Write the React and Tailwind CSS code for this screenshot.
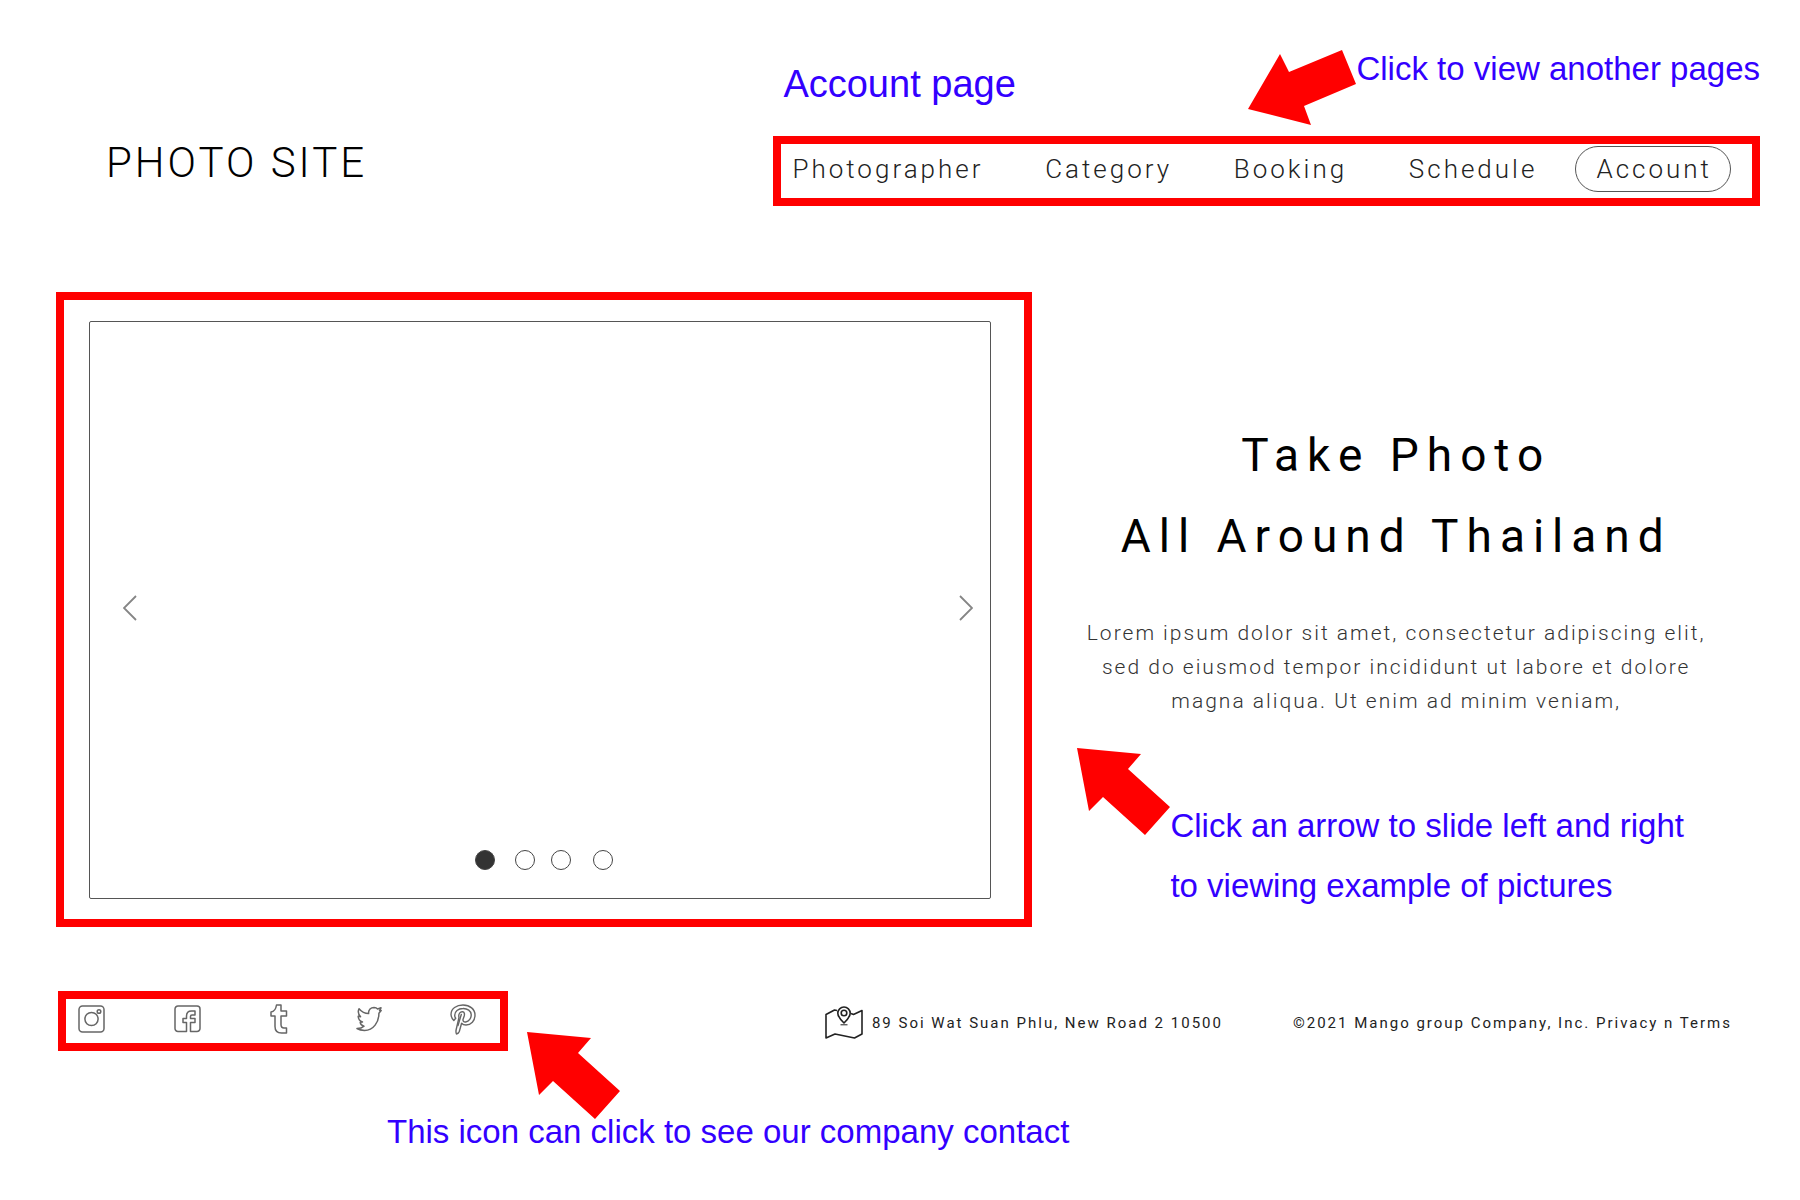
import React, { useState } from "react";

const NAV = ["Photographer", "Category", "Booking", "Schedule"];
const DOT_GAPS = ["", "ml-5", "ml-4", "ml-[22px]"];

function ArrowUpLeft({ className }) {
  return (
    <svg aria-hidden="true" width="93" height="87" viewBox="0 0 93 87" className={`shrink-0 ${className}`}>
      <polygon fill="#ff0000" points="0,0 64,6 51,21 93,59 68,87 26,49 12,63" />
    </svg>
  );
}

function ArrowDownLeft({ className }) {
  return (
    <svg aria-hidden="true" width="108" height="75" viewBox="0 0 108 75" className={`shrink-0 ${className}`}>
      <polygon fill="#ff0000" points="0,59 32,4 41,22 94,0 108,34 56,56 63,75" />
    </svg>
  );
}

function Chevron({ points }) {
  return (
    <svg aria-hidden="true" width="14" height="26" viewBox="0 0 14 26" fill="none" stroke="#858585" strokeWidth="1.8">
      <polyline points={points} />
    </svg>
  );
}

const line = { fill: "none", stroke: "#666666", strokeWidth: 1.5, strokeLinejoin: "round", strokeLinecap: "round" };

function Instagram() {
  return (
    <svg aria-hidden="true" width="28" height="28" viewBox="0 0 28 28" {...line}>
      <rect x="1" y="1" width="25" height="26" rx="3.5" />
      <circle cx="13.5" cy="14" r="6.6" />
      <circle cx="21" cy="6.5" r="1.8" />
    </svg>
  );
}

function Facebook() {
  return (
    <svg aria-hidden="true" width="28" height="28" viewBox="0 0 28 28" {...line}>
      <path d="M12.5 26.5H4A3 3 0 0 1 1 23.500V4A3 3 0 0 1 4 1H23A3 3 0 0 1 26 4V23.500A3 3 0 0 1 23 26.500H16.500V17.500H21V13.500H16.500V11.500Q16.500 10 18 10H21V6H17.500Q12.500 6 12.500 11V13.500H9V17.500H12.500Z" />
    </svg>
  );
}

function Tumblr() {
  return (
    <svg aria-hidden="true" width="18" height="30" viewBox="0 0 18 30" {...line}>
      <path d="M6.500 1H11V7H16.500V12H11V20.500Q11 24 14 24H16.500V29H11.500Q5 29 5 22.500V12H1V8Q5.500 7.500 6.500 1Z" />
    </svg>
  );
}

function Twitter() {
  return (
    <svg aria-hidden="true" width="26" height="26" viewBox="0 0 26 26" {...line}>
      <path d="M1 22.500Q5.500 22.500 8 20.200Q4.500 19.300 4.200 16.200L6.500 16Q2.300 14.500 2.200 10.200L4.600 10.700Q1 7.200 3 2.700Q7 7.400 12.600 7.600C12.200 3.500 15 1.500 18 1.500Q20.300 1.600 21.600 3L25 1.800L23.600 4.600L25.200 4.500L22.900 7.200C23 16 17.500 24.500 8.500 24.500Q4 24.400 1 22.500Z" />
    </svg>
  );
}

function Pinterest() {
  return (
    <svg aria-hidden="true" width="26" height="31" viewBox="0 0 26 31" {...line} strokeWidth="1.4">
      <path d="M3.800 16.500A9.500 9.500 0 0 1 1 10.500C1 4.500 6.500 1 13 1C20 1 25 5.300 25 11C25 17 21 21 16 21Q13 21 11.600 19.200L9.300 27.500Q8.500 29.500 6.500 30Q5.600 28 6.200 25.500L9 13.500C8 9.500 10.500 7.600 12.500 7.800C14.600 8 14.700 10.200 14.200 12L13 15.500C12.700 17.300 14 18.300 15.700 18C19 17.500 21.400 14 21.200 10.500C21 7 17.500 4.400 13 4.500C8 4.500 4.700 7.500 4.700 11.200Q4.700 13 5.700 14.300Z" />
      <path d="M8 21.500L11.300 10.500" />
    </svg>
  );
}

function MapPin() {
  return (
    <svg aria-hidden="true" width="38" height="34" viewBox="0 0 38 34" fill="none" stroke="#222222" strokeWidth="1.6" strokeLinejoin="round">
      <path d="M12 4.500L9.500 4L1 8.500V32L10 28L29.500 32L37 28V4.500L28.500 8.500L26 7.500" />
      <path d="M19 17Q12.800 11 12.800 7.200A6.200 6.200 0 0 1 25.200 7.200Q25.200 11 19 17Z" />
      <circle cx="19" cy="7" r="2.800" />
      <path d="M15.500 18.800H22.500" strokeWidth="1" />
    </svg>
  );
}

const SOCIAL = [
  ["Instagram", Instagram],
  ["Facebook", Facebook],
  ["Tumblr", Tumblr],
  ["Twitter", Twitter],
  ["Pinterest", Pinterest],
];

function Carousel() {
  const [slide, setSlide] = useState(0);
  const move = (step) => setSlide((slide + step + 4) % 4);
  return (
    <section aria-label="Example pictures" className="w-[57.3%] shrink-0 border-8 border-[#ff0000] pt-[21px] pr-[33px] pb-5 pl-[25px]">
      <div className="grid aspect-[902/578] grid-rows-[1fr_auto_1fr] rounded-xs border border-[#555555]">
        <div />
        <div className="flex items-center justify-between pr-[17px] pb-1 pl-[33px]">
          <button type="button" aria-label="Previous picture" onClick={() => move(-1)}>
            <Chevron points="13,1 1,13 13,25" />
          </button>
          <button type="button" aria-label="Next picture" onClick={() => move(1)}>
            <Chevron points="1,1 13,13 1,25" />
          </button>
        </div>
        <div className="flex items-end justify-center pb-7 pl-2">
          {DOT_GAPS.map((gap, i) => (
            <button
              key={i}
              type="button"
              aria-label={`Picture ${i + 1}`}
              onClick={() => setSlide(i)}
              className={`size-5 rounded-full border border-[#444444] ${gap} ${i === slide ? "bg-[#333333]" : "bg-white"}`}
            />
          ))}
        </div>
      </div>
    </section>
  );
}

export default function App() {
  return (
    <div className="min-h-screen bg-white pr-10 pl-14 font-[Roboto,sans-serif] text-black">
      <header className="flex items-end justify-between">
        <h1 className="pb-[17px] pl-[50px] text-[42px] leading-[52px] font-light tracking-[3px] whitespace-nowrap">
          PHOTO SITE
        </h1>
        <div className="w-[57.9%]">
          <div className="flex h-[136px] items-start justify-between pl-[10px] font-['Liberation_Sans',Arial,sans-serif] text-[#3300ff]">
            <p className="pt-[62px] text-[38px] leading-[44px] whitespace-nowrap">Account page</p>
            <div className="flex items-start">
              <ArrowDownLeft className="mt-[50px]" />
              <p className="pt-[50px] text-[33px] leading-[38px] whitespace-nowrap">Click to view another pages</p>
            </div>
          </div>
          <nav className="flex items-center border-8 border-[#ff0000] pt-0.5 pr-[21px] pb-1.5 pl-[11px] text-[26px] leading-[44px] font-light tracking-[3px] text-[#222222]">
            <div className="flex flex-1 justify-between pr-[38px]">
              {NAV.map((item) => (
                <a key={item} href="#">{item}</a>
              ))}
            </div>
            <a href="#" aria-current="page" className="rounded-full border border-[#555555] pr-[18px] pl-5">
              Account
            </a>
          </nav>
        </div>
      </header>

      <main className="mt-[86px] flex">
        <Carousel />
        <div className="flex-1">
          <h2 className="pt-[123px] text-center text-[46px] leading-[81px] font-normal tracking-[8px]">
            Take Photo
            <br />
            All Around Thailand
          </h2>
          <p className="mt-[39px] text-center text-[21px] leading-[34px] font-light tracking-[2px] text-[#333333]">
            Lorem ipsum dolor sit amet, consectetur adipiscing elit,
            <br />
            sed do eiusmod tempor incididunt ut labore et dolore
            <br />
            magna aliqua. Ut enim ad minim veniam,
          </p>
          <div className="mt-[30px] ml-[45px] flex items-start">
            <ArrowUpLeft className="" />
            <p className="pt-12 font-['Liberation_Sans',Arial,sans-serif] text-[33px] leading-[60px] whitespace-nowrap text-[#3300ff]">
              Click an arrow to slide left and right
              <br />
              to viewing example of pictures
            </p>
          </div>
        </div>
      </main>

      <footer className="mt-16">
        <div className="flex items-start pr-7 pl-0.5">
          <div className="flex h-[60px] w-[450px] items-center justify-between border-8 border-[#ff0000] pr-6 pb-1 pl-3">
            {SOCIAL.map(([name, Icon]) => (
              <a key={name} href="#" aria-label={name}>
                <Icon />
              </a>
            ))}
          </div>
          <ArrowUpLeft className="mt-[41px] ml-[19px]" />
          <div className="ml-auto flex items-center gap-[70px] pt-[15px] text-[15px] leading-[34px] tracking-[2px] whitespace-nowrap text-[#222222]">
            <address className="flex items-center gap-[9px] not-italic">
              <MapPin />
              89 Soi Wat Suan Phlu, New Road 2 10500
            </address>
            <p>©2021 Mango group Company, Inc. Privacy n Terms</p>
          </div>
        </div>
        <p className="-mt-1.5 pl-[331px] font-['Liberation_Sans',Arial,sans-serif] text-[33px] leading-[38px] text-[#3300ff]">
          This icon can click to see our company contact
        </p>
      </footer>
    </div>
  );
}
